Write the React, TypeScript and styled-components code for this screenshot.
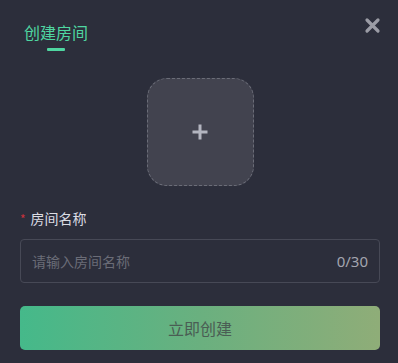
import React, { useState } from "react";
import styled, { createGlobalStyle } from "styled-components";

const Global = createGlobalStyle`
  html, body { margin: 0; padding: 0; background: #2c2e3b; }
  body { font-family: "Noto Sans CJK SC", "Noto Sans", sans-serif; }
  * { box-sizing: border-box; }
`;

const Panel = styled.div`
  width: 398px;
  height: 363px;
  background: #2c2e3b;
  padding: 0 18px 0 20px;
  display: flex;
  flex-direction: column;
`;

const Header = styled.div`
  display: flex;
  justify-content: space-between;
  align-items: flex-start;
  padding-top: 20px;
  margin-right: -2px;
`;

const Tab = styled.div`
  display: flex;
  flex-direction: column;
  align-items: center;
  padding-left: 4px;
`;

const TabText = styled.span`
  font-size: 16px;
  line-height: 24px;
  color: #4fd6a1;
`;

const TabBar = styled.span`
  width: 18px;
  height: 3px;
  margin-top: 4px;
  background: #4fd6a1;
  border-radius: 1px;
`;

const Close = styled.button`
  width: 20px;
  height: 20px;
  padding: 0;
  margin-top: -5px;
  border: none;
  background: transparent;
  display: flex;
  align-items: center;
  justify-content: center;
  cursor: pointer;
`;

const UploadRow = styled.div`
  display: flex;
  justify-content: center;
  margin-top: 27px;
`;

const Upload = styled.div`
  width: 107px;
  height: 108px;
  border-radius: 20px;
  border: 1px dashed #6b6d78;
  background: #42434f;
  display: flex;
  align-items: center;
  justify-content: center;
`;

const Field = styled.div`
  display: flex;
  flex-direction: column;
  margin-top: 22px;
`;

const Label = styled.label`
  display: flex;
  align-items: center;
  font-size: 14px;
  line-height: 20px;
  color: #dcdde4;
`;

const Star = styled.span`
  color: #c8313b;
  font-size: 12px;
  margin-right: 5px;
  position: relative;
  top: 1px;
`;

const InputBox = styled.div`
  margin-top: 11px;
  height: 44px;
  border: 1px solid #474956;
  border-radius: 4px;
  display: flex;
  align-items: center;
  padding: 0 11px 0 11px;
`;

const Input = styled.input`
  flex: 1;
  min-width: 0;
  padding: 0;
  background: transparent;
  border: none;
  outline: none;
  font-family: inherit;
  font-size: 14px;
  color: #dcdde4;
  &::placeholder { color: #6a6c77; }
`;

const Count = styled.span`
  font-size: 15px;
  color: #a3a5af;
  font-family: "Noto Sans", sans-serif;
`;

const Submit = styled.button`
  margin-top: 23px;
  height: 44px;
  border: none;
  border-radius: 5px;
  background: linear-gradient(90deg, #45b98a 0%, #6ab07f 50%, #8fad78 100%);
  font-family: inherit;
  font-size: 16px;
  color: #4a5d54;
  cursor: pointer;
`;

export default function App() {
  const [name, setName] = useState("");
  return (
    <>
      <Global />
      <Panel>
        <Header>
          <Tab>
            <TabText>创建房间</TabText>
            <TabBar />
          </Tab>
          <Close aria-label="close">
            <svg width="17" height="17" viewBox="0 0 17 17">
              <path d="M3 3 L14 14 M14 3 L3 14" stroke="#9b9ca5" strokeWidth="3.2" strokeLinecap="round" />
            </svg>
          </Close>
        </Header>
        <UploadRow>
          <Upload>
            <svg width="18" height="18" viewBox="0 0 18 18">
              <path d="M9 1.5 V16.5 M1.5 9 H16.5" stroke="#b3b5c0" strokeWidth="3" />
            </svg>
          </Upload>
        </UploadRow>
        <Field>
          <Label>
            <Star>*</Star>房间名称
          </Label>
          <InputBox>
            <Input
              placeholder="请输入房间名称"
              maxLength={30}
              value={name}
              onChange={(e) => setName(e.target.value)}
            />
            <Count>{name.length}/30</Count>
          </InputBox>
        </Field>
        <Submit>立即创建</Submit>
      </Panel>
    </>
  );
}
